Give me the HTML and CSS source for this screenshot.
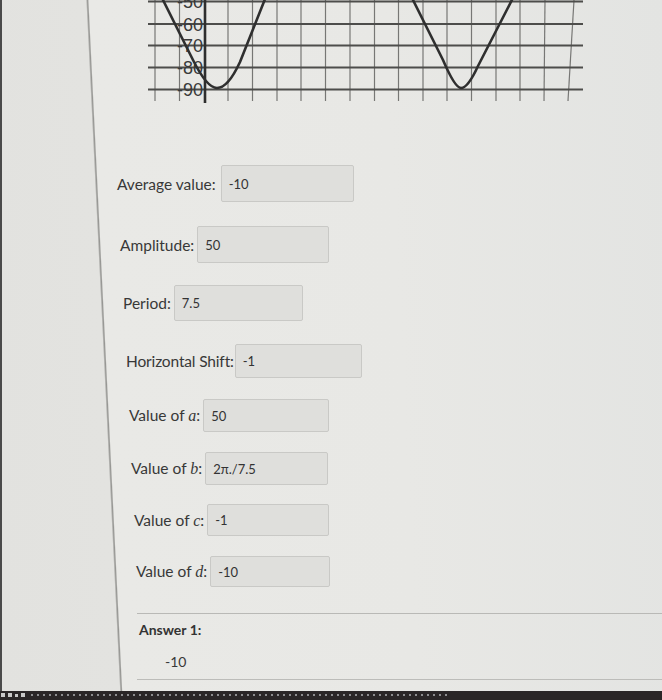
FILE: index.html
```html
<!DOCTYPE html>
<html lang="en">
<head>
<meta charset="utf-8">
<title>Sinusoid answers</title>
<link rel="stylesheet" href="styles.css">
</head>
<body>
<div class="screen">
  <svg class="graph" width="662" height="105" viewBox="0 0 662 105" xmlns="http://www.w3.org/2000/svg">
    <g class="vgrid">
      <line x1="155" y1="0" x2="155" y2="101"/>
      <line x1="179.5" y1="0" x2="179.5" y2="101"/>
      <line x1="228" y1="0" x2="228" y2="101"/>
      <line x1="252.5" y1="0" x2="252.5" y2="101"/>
      <line x1="277" y1="0" x2="277" y2="101"/>
      <line x1="301" y1="0" x2="301" y2="101"/>
      <line x1="325.5" y1="0" x2="325.5" y2="101"/>
      <line x1="350" y1="0" x2="350" y2="101"/>
      <line x1="374.5" y1="0" x2="374.5" y2="101"/>
      <line x1="398.5" y1="0" x2="398.5" y2="101"/>
      <line x1="423" y1="0" x2="423" y2="101"/>
      <line x1="447" y1="0" x2="447" y2="101"/>
      <line x1="471.5" y1="0" x2="471.5" y2="101"/>
      <line x1="496" y1="0" x2="496" y2="101"/>
      <line x1="520" y1="0" x2="520" y2="101"/>
      <line x1="545" y1="0" x2="544" y2="101"/>
      <line x1="574" y1="0" x2="568" y2="101"/>
    </g>
    <g class="hgrid">
      <line x1="148" y1="1.5" x2="583" y2="1.5"/>
      <line x1="148" y1="24" x2="583" y2="24"/>
      <line x1="148" y1="45.5" x2="583" y2="45.5"/>
      <line x1="148" y1="67.5" x2="583" y2="67.5"/>
      <line x1="148" y1="89.5" x2="583" y2="89.5"/>
    </g>
    <line class="axis" x1="205" y1="0" x2="205" y2="103"/>
    <g class="ylabels">
      <text x="203" y="8">-50</text>
      <text x="203" y="30.5">-60</text>
      <text x="203" y="52">-70</text>
      <text x="203" y="74">-80</text>
      <text x="203" y="96">-90</text>
    </g>
    <path class="curve" d="M160,-6 L193,60 Q207,88 217,88 Q228,88 240,62 L267,-6"/>
    <path class="curve" d="M410,-6 L443,60 Q455,88 461,88 Q468,88 478,66 L515,-6"/>
  </svg>

  <div class="form">
    <div class="row r1"><span class="label">Average value:</span><span class="box">-10</span></div>
    <div class="row r2"><span class="label">Amplitude:</span><span class="box">50</span></div>
    <div class="row r3"><span class="label">Period:</span><span class="box">7.5</span></div>
    <div class="row r4"><span class="label">Horizontal Shift:</span><span class="box">-1</span></div>
    <div class="row r5"><span class="label">Value of <i class="var">a</i>:</span><span class="box">50</span></div>
    <div class="row r6"><span class="label">Value of <i class="var">b</i>:</span><span class="box">2π./7.5</span></div>
    <div class="row r7"><span class="label">Value of <i class="var">c</i>:</span><span class="box">-1</span></div>
    <div class="row r8"><span class="label">Value of <i class="var">d</i>:</span><span class="box">-10</span></div>
  </div>

  <div class="answer">
    <div class="answer-title">Answer 1:</div>
    <div class="answer-value">-10</div>
  </div>

  <div class="taskbar">
    <span class="tb-icon"></span><span class="tb-icon"></span><span class="tb-icon small"></span><span class="tb-icon"></span>
    <span class="tb-dots"></span>
  </div>
</div>
</body>
</html>
```

FILE: styles.css
```css
html, body {
  margin: 0;
  padding: 0;
  background: #e6e6e3;
}

.screen {
  position: relative;
  width: 662px;
  height: 700px;
  overflow: hidden;
  display: flex;
  flex-direction: column;
  font-family: Lato, "Open Sans", "Liberation Sans", sans-serif;
  color: #383838;
  background:
    linear-gradient(to right, #4a4a4a 0, #4a4a4a 2px, transparent 2px),
    linear-gradient(87.2deg, #e2e2df 0, #e3e3e0 120px, #a4a4a1 121.2px, #969693 121.8px, #e9e9e6 123px, #e8e8e5 60%, #e3e4e2 100%);
}

.graph {
  display: block;
  flex: none;
}

.vgrid line {
  stroke: #777775;
  stroke-width: 1.2;
}

.hgrid line {
  stroke: #4d4d4b;
  stroke-width: 2;
}

.axis {
  stroke: #2e2e2e;
  stroke-width: 2.6;
}

.ylabels text {
  font-family: "Liberation Sans", Arial, sans-serif;
  font-size: 18px;
  fill: #3a3a3a;
  text-anchor: end;
}

.curve {
  fill: none;
  stroke: #2f2f2f;
  stroke-width: 2.6;
  stroke-linejoin: round;
}

.form {
  display: flex;
  flex-direction: column;
}

.row {
  display: flex;
  align-items: center;
  gap: 3px;
}

.label {
  font-size: 15.5px;
  white-space: nowrap;
}

.var {
  font-family: "Liberation Serif", "DejaVu Serif", serif;
  font-style: italic;
  font-size: 16px;
}

.box {
  box-sizing: border-box;
  display: flex;
  align-items: center;
  padding-left: 7px;
  font-size: 13px;
  color: #333;
  background: #dfdfdc;
  border: 1px solid #c9c9c6;
  border-radius: 2px;
}

.r1 { margin-top: 60px; padding-left: 117px; }
.r1 .box { width: 133px; height: 37px; margin-left: 2px; }
.r2 { margin-top: 24px; padding-left: 120px; }
.r2 .box { width: 132px; height: 37px; }
.r3 { margin-top: 22px; padding-left: 123px; }
.r3 .box { width: 129px; height: 36px; }
.r4 { margin-top: 23px; padding-left: 126px; }
.r4 .box { width: 127px; height: 34px; margin-left: -2px; }
.r4 .label { letter-spacing: -0.15px; }
.r5 { margin-top: 21px; padding-left: 129px; }
.r5 .box { width: 126px; height: 33px; }
.r6 { margin-top: 20px; padding-left: 131px; }
.r6 .box { width: 123px; height: 33px; }
.r7 { margin-top: 19px; padding-left: 134px; }
.r7 .box { width: 122px; height: 32px; }
.r8 { margin-top: 20px; padding-left: 136px; }
.r8 .box { width: 120px; height: 31px; }

.answer {
  margin-top: 26px;
  margin-left: 137px;
  border-top: 1px solid #b9b9b6;
  border-bottom: 1px solid #bcbcb9;
  padding: 7px 0 8px 2px;
}

.answer-title {
  font-size: 14px;
  font-weight: bold;
  line-height: 18px;
  color: #333;
}

.answer-value {
  margin-top: 14px;
  padding-left: 26px;
  font-size: 14px;
  line-height: 18px;
}

.taskbar {
  margin-top: auto;
  height: 9px;
  background: #2a2627;
  display: flex;
  align-items: flex-start;
  padding-top: 2px;
  box-sizing: border-box;
  gap: 3px;
  padding-left: 1px;
}

.tb-icon {
  width: 4px;
  height: 4px;
  background: #c8c8c8;
  flex: none;
}

.tb-icon.small {
  width: 3px;
  height: 3px;
  margin-top: 1px;
}

.tb-dots {
  flex: 1;
  height: 2px;
  margin-top: 1px;
  margin-left: 3px;
  background-image: linear-gradient(to right, #8d8d8f 0, #8d8d8f 2px, transparent 2px);
  background-size: 6px 2px;
  background-repeat: repeat-x;
  max-width: 420px;
}
```
